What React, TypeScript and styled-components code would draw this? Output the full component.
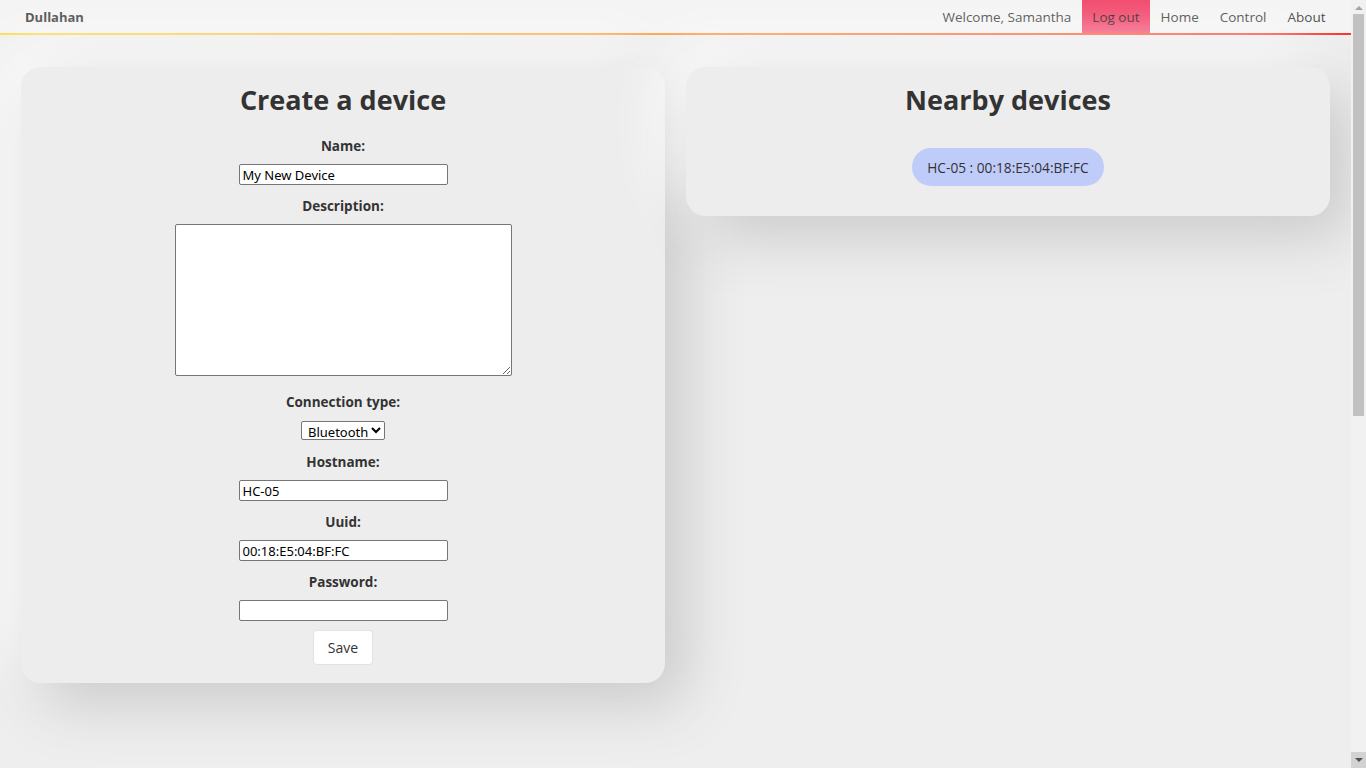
import styled, { createGlobalStyle } from "styled-components";

const GlobalStyle = createGlobalStyle`
  html, body {
    margin: 0;
    padding: 0;
    background: #eeeeee;
    font-family: "Open Sans", "Noto Sans", sans-serif;
    color: #333;
  }
`;

const Shell = styled.div`
  display: flex;
  align-items: flex-start;
`;

const Page = styled.div`
  flex: 1;
  min-width: 0;
  min-height: 1390px;
`;

/* browser scrollbar as seen in the screenshot */
const ScrollBar = styled.aside`
  position: sticky;
  top: 0;
  width: 15px;
  height: 100vh;
  flex-shrink: 0;
  display: flex;
  flex-direction: column;
  background: #f1f1f1;
`;

const ScrollButton = styled.div<{ $down?: boolean }>`
  height: ${(p) => (p.$down ? "16px" : "13px")};
  display: flex;
  align-items: center;
  justify-content: center;
  background: ${(p) => (p.$down ? "#d2d2d2" : "#f1f1f1")};
  &::after {
    content: "";
    width: 0;
    height: 0;
    border-left: 4px solid transparent;
    border-right: 4px solid transparent;
    ${(p) =>
      p.$down
        ? "border-top: 4px solid #505050;"
        : "border-bottom: 4px solid #a3a3a3; margin-top: 2px;"}
  }
`;

const ScrollTrack = styled.div`
  flex: 1;
  padding: 1px 2px 0 2px;
`;

const ScrollThumb = styled.div`
  height: 402px;
  background: #c1c1c1;
`;

const Header = styled.header`
  display: flex;
  flex-direction: column;
`;

const Nav = styled.nav`
  height: 33px;
  display: flex;
  align-items: stretch;
  justify-content: space-between;
  padding: 0 15px 0 25px;
  background: #f4f4f4;
`;

const GradientLine = styled.div`
  height: 2px;
  background: linear-gradient(90deg, #fdd93a 0%, #ff9a30 45%, #ff2a2a 100%);
`;

const Brand = styled.div`
  display: flex;
  align-items: center;
  font-size: 13px;
  font-weight: 700;
  color: #444;
`;

const NavLinks = styled.div`
  display: flex;
  align-items: stretch;
`;

const NavItem = styled.div<{ $active?: boolean }>`
  display: flex;
  align-items: center;
  padding: 0 10.5px;
  font-size: 13.5px;
  color: ${(p) => (p.$active ? "#3a1a25" : "#444")};
  background: ${(p) => (p.$active ? "#f2466a" : "transparent")};
`;

const Grid = styled.main`
  display: grid;
  grid-template-columns: 1fr 1fr;
  gap: 21px;
  padding: 32px 21px;
  align-items: start;
`;

const Card = styled.section`
  border-radius: 20px;
  background: #ededed;
  box-shadow: 20px 20px 60px #c9c9c9, -20px -20px 60px #ffffff;
  padding: 16px 20px 18px;
  display: flex;
  flex-direction: column;
  align-items: center;
`;

const Title = styled.h2`
  margin: 0;
  font-size: 27px;
  line-height: 34px;
  font-weight: 700;
  color: #333;
`;

const Form = styled.form`
  margin-top: 20px;
  display: flex;
  flex-direction: column;
  align-items: center;
`;

const Label = styled.label`
  display: block;
  font-size: 13.5px;
  line-height: 18px;
  font-weight: 700;
  color: #333;
  margin-bottom: 9px;
`;

const Input = styled.input`
  box-sizing: border-box;
  width: 209px;
  height: 21px;
  margin: 0 0 12px;
  padding: 1px 3px;
  border: 1px solid #767676;
  border-radius: 2px;
  background: #fff;
  font-family: "Noto Sans", sans-serif;
  font-size: 13px;
  color: #000;
`;

const TextArea = styled.textarea`
  box-sizing: border-box;
  display: block;
  width: 337px;
  height: 152px;
  margin: 0 0 17px;
  border: 1px solid #767676;
  border-radius: 2px;
  background: #fff;
`;

const Select = styled.select`
  box-sizing: border-box;
  width: 84px;
  height: 19px;
  margin: 1px 0 13px;
  padding: 0 0 0 2px;
  border: 1px solid #767676;
  border-radius: 2px;
  background: #fff;
  font-family: "Noto Sans", sans-serif;
  font-size: 13px;
  color: #000;
`;

const SaveButton = styled.button`
  width: 60px;
  height: 35px;
  margin-top: -3px;
  border: 1px solid #e2e2e2;
  border-radius: 4px;
  background: #fff;
  font-family: inherit;
  font-size: 14px;
  color: #333;
`;

const DeviceList = styled.div`
  margin-top: 31px;
  margin-bottom: 12px;
  display: flex;
  flex-direction: column;
  align-items: center;
`;

const DevicePill = styled.div`
  height: 38px;
  padding: 0 15px;
  display: flex;
  align-items: center;
  border-radius: 19px;
  background: #bfccf9;
  font-size: 13.7px;
  color: #333;
`;

export default function App() {
  return (
    <Shell>
      <GlobalStyle />
      <Page>
        <Header>
          <Nav>
            <Brand>Dullahan</Brand>
            <NavLinks>
              <NavItem>Welcome, Samantha</NavItem>
              <NavItem $active>Log out</NavItem>
              <NavItem>Home</NavItem>
              <NavItem>Control</NavItem>
              <NavItem>About</NavItem>
            </NavLinks>
          </Nav>
          <GradientLine />
        </Header>
        <Grid>
          <Card>
            <Title>Create a device</Title>
            <Form onSubmit={(e) => e.preventDefault()}>
              <Label>Name:</Label>
              <Input defaultValue="My New Device" />
              <Label>Description:</Label>
              <TextArea />
              <Label>Connection type:</Label>
              <Select defaultValue="bt">
                <option value="bt">Bluetooth</option>
                <option value="wifi">Wi-Fi</option>
              </Select>
              <Label>Hostname:</Label>
              <Input defaultValue="HC-05" />
              <Label>Uuid:</Label>
              <Input defaultValue="00:18:E5:04:BF:FC" />
              <Label>Password:</Label>
              <Input type="password" />
              <SaveButton type="submit">Save</SaveButton>
            </Form>
          </Card>
          <Card>
            <Title>Nearby devices</Title>
            <DeviceList>
              <DevicePill>HC-05 : 00:18:E5:04:BF:FC</DevicePill>
            </DeviceList>
          </Card>
        </Grid>
      </Page>
      <ScrollBar>
        <ScrollButton />
        <ScrollTrack>
          <ScrollThumb />
        </ScrollTrack>
        <ScrollButton $down />
      </ScrollBar>
    </Shell>
  );
}
